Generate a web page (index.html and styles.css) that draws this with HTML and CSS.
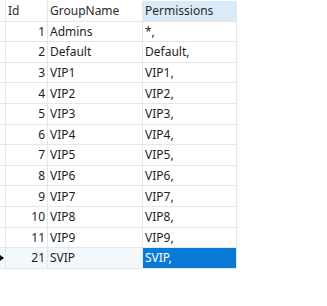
FILE: index.html
```html
<!DOCTYPE html>
<html>
	<head>
		<link rel="stylesheet" href="styles.css">
		<title>Groups</title>
	</head>
	<body>
		<table class="grid">
			<tr class="head">
				<th class="rh"></th>
				<th class="id">Id</th>
				<th class="name">GroupName</th>
				<th class="perm sorted">Permissions</th>
			</tr>
			<tr><td class="rh"></td><td class="id">1</td><td class="name">Admins</td><td class="perm">*,</td></tr>
			<tr><td class="rh"></td><td class="id">2</td><td class="name">Default</td><td class="perm">Default,</td></tr>
			<tr><td class="rh"></td><td class="id">3</td><td class="name">VIP1</td><td class="perm">VIP1,</td></tr>
			<tr><td class="rh"></td><td class="id">4</td><td class="name">VIP2</td><td class="perm">VIP2,</td></tr>
			<tr><td class="rh"></td><td class="id">5</td><td class="name">VIP3</td><td class="perm">VIP3,</td></tr>
			<tr><td class="rh"></td><td class="id">6</td><td class="name">VIP4</td><td class="perm">VIP4,</td></tr>
			<tr><td class="rh"></td><td class="id">7</td><td class="name">VIP5</td><td class="perm">VIP5,</td></tr>
			<tr><td class="rh"></td><td class="id">8</td><td class="name">VIP6</td><td class="perm">VIP6,</td></tr>
			<tr><td class="rh"></td><td class="id">9</td><td class="name">VIP7</td><td class="perm">VIP7,</td></tr>
			<tr><td class="rh"></td><td class="id">10</td><td class="name">VIP8</td><td class="perm">VIP8,</td></tr>
			<tr><td class="rh"></td><td class="id">11</td><td class="name">VIP9</td><td class="perm">VIP9,</td></tr>
			<tr class="current"><td class="rh"><span class="arrow"></span></td><td class="id">21</td><td class="name">SVIP</td><td class="perm selected">SVIP,</td></tr>
		</table>
	</body>
</html>
```

FILE: styles.css
```css
body {
	margin: 0;
	background: #ffffff;
	font-family: "Noto Sans", "Open Sans", sans-serif;
	font-size: 12px;
	color: #1e1e1e;
}
.grid {
	border-collapse: collapse;
	table-layout: fixed;
	margin-top: 1px;
}
.grid th,
.grid td {
	height: 19.6px;
	padding: 0 2px;
	border: 1px solid #e6e6e6;
	border-top: none;
	font-weight: normal;
	text-align: left;
	white-space: nowrap;
	line-height: 19px;
}
.head th {
	color: #2a2a2a;
}
.rh {
	width: 5px;
	padding: 0 !important;
	border-left: none !important;
	position: relative;
}
.id {
	width: 37px;
}
td.id {
	text-align: right;
}
.name {
	width: 90px;
}
.perm {
	width: 89px;
}
.sorted {
	background: #d9eaf8;
}
.current td {
	background: #f3f8fc;
}
.current td.selected {
	background: #0a7ad8;
	color: #ffffff;
}
.arrow {
	position: absolute;
	left: 0;
	top: 7px;
	width: 0;
	height: 0;
	border-top: 3px solid transparent;
	border-bottom: 3px solid transparent;
	border-left: 4px solid #000000;
}
```
